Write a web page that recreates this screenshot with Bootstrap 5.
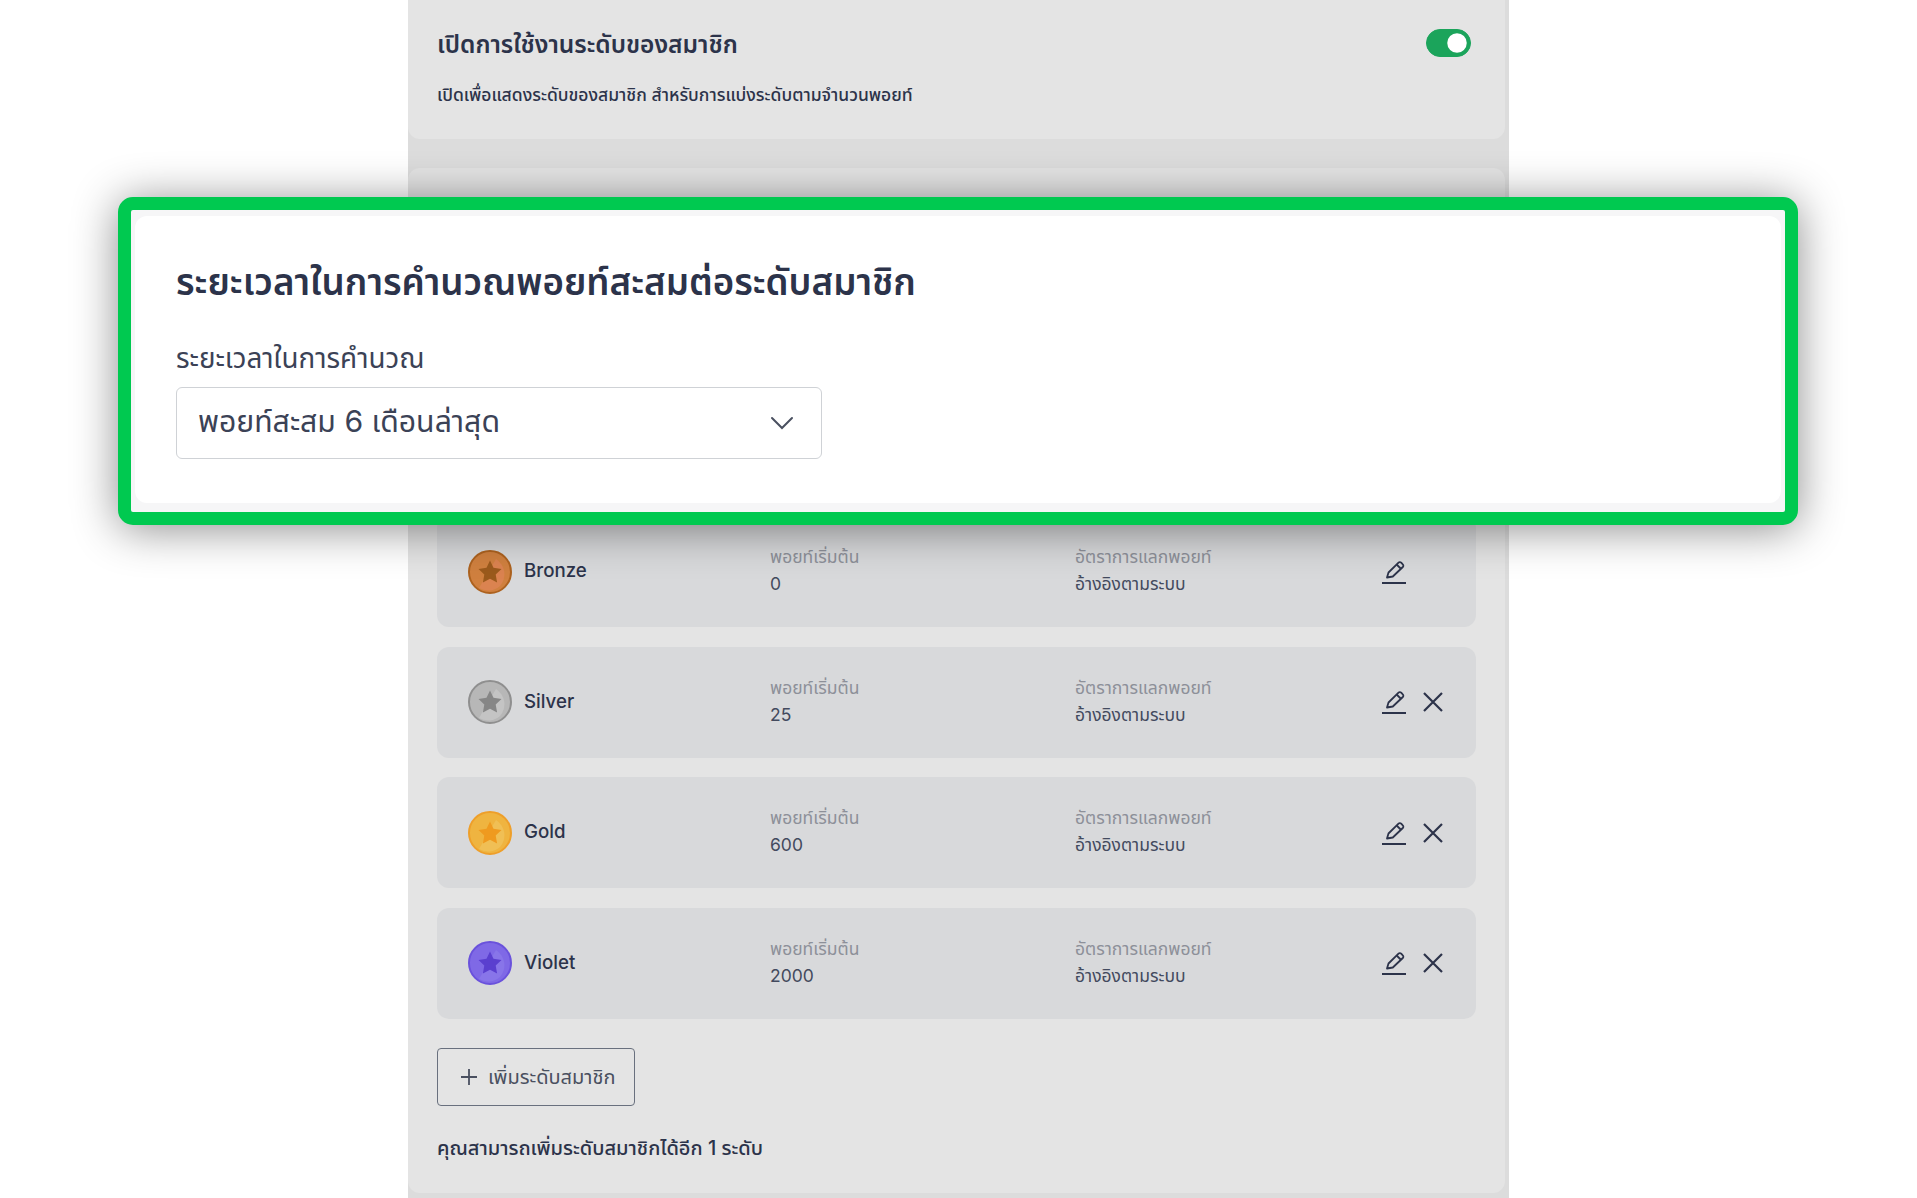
<!DOCTYPE html>
<html lang="th">
<head>
<meta charset="UTF-8">
<meta name="viewport" content="width=device-width, initial-scale=1.0">
<title>ระดับสมาชิก</title>
<link href="https://cdn.jsdelivr.net/npm/bootstrap@5.3.0/dist/css/bootstrap.min.css" rel="stylesheet">
<style>
html, body { height: 1198px; overflow: hidden; }
body { font-family: Inter, "Noto Sans Thai", "Noto Sans", "Open Sans", sans-serif; color: #2c334a; background: #fff; }
.stage { height: 1198px; position: relative; overflow: hidden; }
.panel { width: 1101px; height: 1198px; margin: 0 auto; background: #dcdcdc; padding-right: 4px; }
.panel-card { background: #e4e4e4; border-radius: 0 0 12px 12px; }
.top-card { height: 139px; padding: 29px 29px 0; margin-bottom: 29px; }
.top-title { font-size: 24.5px; font-weight: 600; line-height: 30px; margin: 0; }
.top-sub { font-size: 17.5px; font-weight: 500; line-height: 24px; margin: 24px 0 0; }
.switch { margin: 0 5px 0 0; padding: 0; min-height: 0; }
.switch .form-check-input { width: 45px; height: 28px; margin: 0; float: none; background-color: #1ba45b; border-color: #1ba45b; }
.tier-card { height: 1025px; border-radius: 12px; padding: 348px 29px 0; }
.tier { height: 111px; background: #d8d9db; border-radius: 12px; padding-left: 31px; margin-bottom: 19.5px; }
.tier-name { width: 302px; gap: 12px; font-size: 18.7px; font-weight: 500; }
.tier-name svg { width: 44px; height: 44px; }
.tier-col { width: 305px; padding-bottom: 3px; font-size: 17.5px; line-height: 27px; color: #434a5e; }
.tier-col small { display: block; font-size: 17.5px; color: #8d9099; }
.tier-act { gap: 17px; margin-left: 2px; color: #2c334a; }
.add-btn { width: 198px; height: 58px; margin-top: 29.5px; gap: 10px; font-size: 20px; color: #4a5060; border-color: #69707e; border-radius: 4px; padding: 0 0 0 22px; }
.add-btn:hover { background: none; color: #4a5060; border-color: #69707e; }
.tier-note { font-size: 20px; font-weight: 500; line-height: 28px; margin: 28px 0 0; }
.focus-box { position: absolute; left: 118px; top: 197px; width: 1680px; height: 328px; border: 13px solid #00c950; border-radius: 15px; background: #f6f6f7; padding: 6px 4px 9px; box-shadow: 0 4px 45px rgba(0,0,0,.45); }
.focus-card { height: 100%; background: #fff; border-radius: 12px; padding: 44px 41px 0; }
.focus-title { font-size: 36.7px; font-weight: 600; line-height: 44px; color: #2c334a; margin: 0 0 37px; }
.focus-label { font-size: 27.8px; line-height: 34px; color: #3b4256; margin-bottom: 12px; }
.focus-select { width: 646px; height: 72px; font-size: 30.2px; color: #3b4256; border-color: #cfd2d6; border-radius: 6px; padding: 0 60px 3px 21px; background-size: 24px 14px; background-position: right 27px center; background-image: url("data:image/svg+xml,%3csvg xmlns='http://www.w3.org/2000/svg' viewBox='0 0 24 14'%3e%3cpath fill='none' stroke='%234a5060' stroke-width='2' stroke-linecap='round' d='M2 2l10 10L22 2'/%3e%3c/svg%3e"); }
</style>
</head>
<body>
<svg width="0" height="0" class="d-block">
  <defs>
    <path id="star" d="M22 10.5l3.5 7.3 8 1.1-5.8 5.6 1.4 8-7.1-3.8-7.1 3.8 1.4-8-5.8-5.6 8-1.1z"/>
    <g id="pencil" fill="none" stroke="currentColor" stroke-width="1.8" stroke-linejoin="round">
      <path d="M5 17.5l1.5-5L16.5 2.6a1.9 1.9 0 0 1 2.7 0l1.6 1.7a1.9 1.9 0 0 1 0 2.7L10.8 16.5z"/>
      <path d="M14.6 4.5l4.6 4.5"/>
      <path d="M0 23h24" stroke-width="2"/>
    </g>
    <path id="close" d="M1 1l18 18M19 1L1 19" fill="none" stroke="currentColor" stroke-width="2.2"/>
  </defs>
</svg>

<div class="stage">
  <div class="panel">
    <div class="panel-card top-card d-flex justify-content-between align-items-start">
      <div>
        <h2 class="top-title">เปิดการใช้งานระดับของสมาชิก</h2>
        <p class="top-sub">เปิดเพื่อแสดงระดับของสมาชิก สำหรับการแบ่งระดับตามจำนวนพอยท์</p>
      </div>
      <div class="form-check form-switch switch">
        <input class="form-check-input" type="checkbox" role="switch" checked aria-label="เปิดการใช้งาน">
      </div>
    </div>

    <div class="panel-card tier-card">
      <div class="tier d-flex align-items-center">
        <div class="tier-name d-flex align-items-center">
          <svg viewBox="0 0 44 44"><circle cx="22" cy="22" r="21" fill="#d0803f" stroke="#ad621f" stroke-width="2"/><path d="M28 9a18 18 0 0 1 4 27 18 18 0 0 1-21 2z" fill="#db8350"/><use href="#star" fill="#9b5a1c"/></svg>
          <span>Bronze</span>
        </div>
        <div class="tier-col"><small>พอยท์เริ่มต้น</small>0</div>
        <div class="tier-col"><small>อัตราการแลกพอยท์</small>อ้างอิงตามระบบ</div>
        <div class="tier-act d-flex align-items-center">
          <svg width="24" height="24" viewBox="0 0 24 24"><use href="#pencil"/></svg>
        </div>
      </div>
      <div class="tier d-flex align-items-center">
        <div class="tier-name d-flex align-items-center">
          <svg viewBox="0 0 44 44"><circle cx="22" cy="22" r="21" fill="#b7b7b7" stroke="#8f8f8f" stroke-width="2"/><path d="M28 9a18 18 0 0 1 4 27 18 18 0 0 1-21 2z" fill="#c4c4c4"/><use href="#star" fill="#868686"/></svg>
          <span>Silver</span>
        </div>
        <div class="tier-col"><small>พอยท์เริ่มต้น</small>25</div>
        <div class="tier-col"><small>อัตราการแลกพอยท์</small>อ้างอิงตามระบบ</div>
        <div class="tier-act d-flex align-items-center">
          <svg width="24" height="24" viewBox="0 0 24 24"><use href="#pencil"/></svg>
          <svg width="20" height="20" viewBox="0 0 20 20"><use href="#close"/></svg>
        </div>
      </div>
      <div class="tier d-flex align-items-center">
        <div class="tier-name d-flex align-items-center">
          <svg viewBox="0 0 44 44"><circle cx="22" cy="22" r="21" fill="#efb440" stroke="#ee9f2a" stroke-width="2"/><path d="M28 9a18 18 0 0 1 4 27 18 18 0 0 1-21 2z" fill="#f0bf55"/><use href="#star" fill="#ef9a1f"/></svg>
          <span>Gold</span>
        </div>
        <div class="tier-col"><small>พอยท์เริ่มต้น</small>600</div>
        <div class="tier-col"><small>อัตราการแลกพอยท์</small>อ้างอิงตามระบบ</div>
        <div class="tier-act d-flex align-items-center">
          <svg width="24" height="24" viewBox="0 0 24 24"><use href="#pencil"/></svg>
          <svg width="20" height="20" viewBox="0 0 20 20"><use href="#close"/></svg>
        </div>
      </div>
      <div class="tier d-flex align-items-center">
        <div class="tier-name d-flex align-items-center">
          <svg viewBox="0 0 44 44"><circle cx="22" cy="22" r="21" fill="#7f69e6" stroke="#6a52dc" stroke-width="2"/><path d="M28 9a18 18 0 0 1 4 27 18 18 0 0 1-21 2z" fill="#8875e9"/><use href="#star" fill="#5a3fcf"/></svg>
          <span>Violet</span>
        </div>
        <div class="tier-col"><small>พอยท์เริ่มต้น</small>2000</div>
        <div class="tier-col"><small>อัตราการแลกพอยท์</small>อ้างอิงตามระบบ</div>
        <div class="tier-act d-flex align-items-center">
          <svg width="24" height="24" viewBox="0 0 24 24"><use href="#pencil"/></svg>
          <svg width="20" height="20" viewBox="0 0 20 20"><use href="#close"/></svg>
        </div>
      </div>

      <button type="button" class="btn add-btn d-flex align-items-center">
        <svg width="18" height="18" viewBox="0 0 18 18"><path d="M9 1v16M1 9h16" fill="none" stroke="currentColor" stroke-width="1.8"/></svg>
        <span>เพิ่มระดับสมาชิก</span>
      </button>
      <p class="tier-note">คุณสามารถเพิ่มระดับสมาชิกได้อีก 1 ระดับ</p>
    </div>
  </div>

  <div class="focus-box">
    <div class="focus-card">
      <h1 class="focus-title">ระยะเวลาในการคำนวณพอยท์สะสมต่อระดับสมาชิก</h1>
      <label class="form-label d-block focus-label" for="period">ระยะเวลาในการคำนวณ</label>
      <select id="period" class="form-select focus-select">
        <option>พอยท์สะสม 6 เดือนล่าสุด</option>
      </select>
    </div>
  </div>
</div>
</body>
</html>
